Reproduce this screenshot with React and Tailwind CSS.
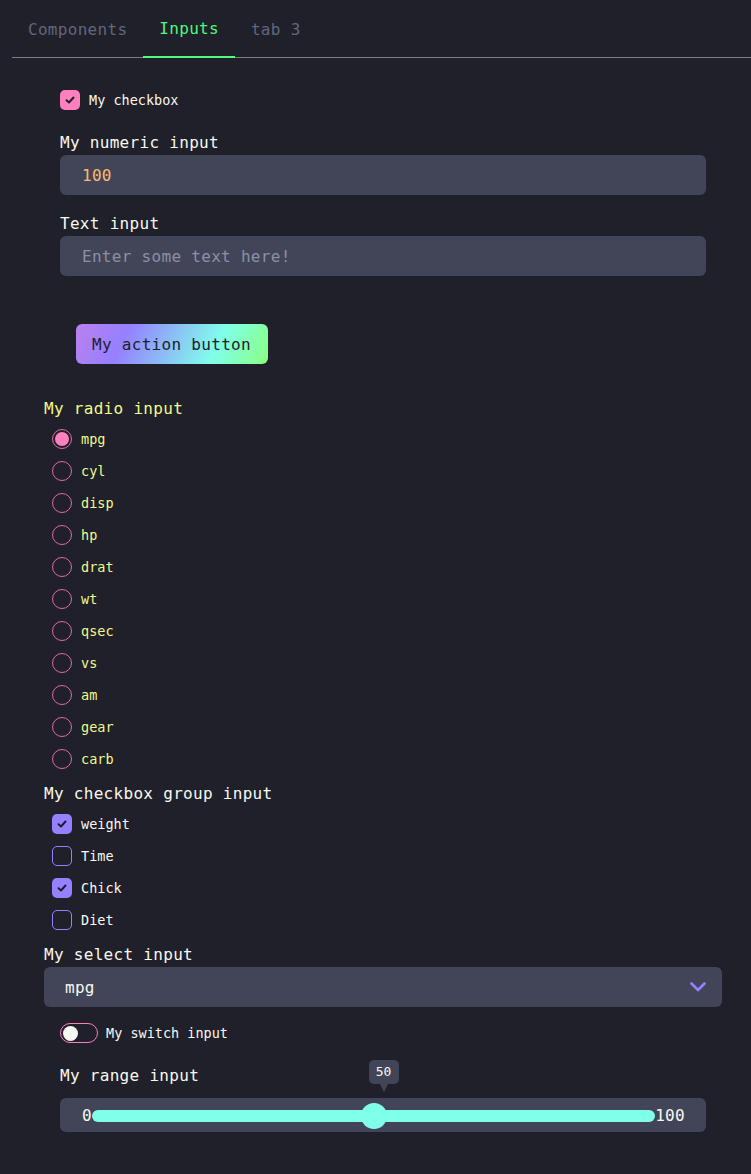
import React, { useState } from 'react';

const font = { fontFamily: '"DejaVu Sans Mono", "Liberation Mono", monospace' };

const radios = ['mpg', 'cyl', 'disp', 'hp', 'drat', 'wt', 'qsec', 'vs', 'am', 'gear', 'carb'];
const groupItems = [
  { label: 'weight', checked: true },
  { label: 'Time', checked: false },
  { label: 'Chick', checked: true },
  { label: 'Diet', checked: false },
];

const Check = () => (
  <svg viewBox="0 0 12 12" className="h-3 w-3" fill="none">
    <path d="M2.5 6.2 L5 8.5 L9.5 3.5" stroke="#1f2029" strokeWidth="2" strokeLinecap="round" strokeLinejoin="round" />
  </svg>
);

const App = () => {
  const [tab] = useState('Inputs');
  const [range] = useState(50);

  return (
    <div className="min-h-[1174px] w-[751px] bg-[#1f2029] text-[#f8f8f2] tracking-[0.3px]" style={font}>
      {/* Tabs */}
      <div className="ml-3 flex h-[58px] border-b border-[#7b7d8e]">
        {['Components', 'Inputs', 'tab 3'].map((t) => (
          <div
            key={t}
            className={`flex h-[58px] items-center px-4 pt-px text-[16px] ${
              t === tab ? '-mb-px border-b-2 border-[#50fa7b] text-[#50fa7b]' : 'text-[#62667f]'
            }`}
          >
            {t}
          </div>
        ))}
      </div>

      <div className="pl-[44px] pr-[29px]">
        {/* First block */}
        <div className="px-4">
          <div className="mt-8 flex h-5 items-center gap-[9px]">
            <div className="flex h-5 w-5 items-center justify-center rounded-[5px] bg-[#ff80bf]">
              <Check />
            </div>
            <span className="pt-px text-[13.5px] tracking-[0px]">My checkbox</span>
          </div>

          <div className="mt-5 pt-px text-[16px] leading-6">My numeric input</div>
          <div className="flex h-10 items-center rounded-[6px] bg-[#424557] px-[22px] pt-[2px] text-[16px] text-[#ffb86c]">
            100
          </div>

          <div className="mt-4 pt-px text-[16px] leading-6">Text input</div>
          <div className="flex h-10 items-center rounded-[6px] bg-[#424557] px-[22px] pt-[2px] text-[16px] text-[#8d8fa3]">
            Enter some text here!
          </div>

          <div className="ml-4 mt-12 flex h-10 w-[192px] items-center rounded-[6px] bg-[linear-gradient(115deg,#bb80ee_0%,#9580ff_26%,#80ffea_72%,#8aff80_100%)] px-4 pt-px text-[16px] text-[#1f2029]">
            My action button
          </div>
        </div>

        {/* Radio */}
        <div className="mt-8 pt-px text-[16px] leading-6 text-[#f1fa8c]">My radio input</div>
        <div className="mt-[2px]">
          {radios.map((r, i) => (
            <div key={r} className="flex h-8 items-center gap-[9px] pl-2">
              <div className="flex h-5 w-5 items-center justify-center rounded-full border-[1.5px] border-[#e06aa9]">
                {i === 0 && <div className="h-[14px] w-[14px] rounded-full bg-[#ff80bf]" />}
              </div>
              <span className="pt-px text-[13.5px] tracking-[0px] text-[#f1fa8c]">{r}</span>
            </div>
          ))}
        </div>

        {/* Checkbox group */}
        <div className="mt-[6px] pt-px text-[16px] leading-6">My checkbox group input</div>
        <div className="mt-[2px]">
          {groupItems.map((c) => (
            <div key={c.label} className="flex h-8 items-center gap-[9px] pl-2">
              <div
                className={`flex h-5 w-5 items-center justify-center rounded-[5px] ${
                  c.checked ? 'bg-[#9580ff]' : 'border-[1.5px] border-[#9580ff]'
                }`}
              >
                {c.checked && <Check />}
              </div>
              <span className="pt-px text-[13.5px] tracking-[0px]">{c.label}</span>
            </div>
          ))}
        </div>

        {/* Select */}
        <div className="mt-[6px] pt-px text-[16px] leading-6">My select input</div>
        <div className="flex h-10 items-center justify-between rounded-[6px] bg-[#424557] pl-[21px] pr-4 text-[16px]">
          <span className="pt-[2px]">mpg</span>
          <svg viewBox="0 0 16 10" className="h-[10px] w-4" fill="none">
            <path d="M1.5 1.5 L8 8 L14.5 1.5" stroke="#9580ff" strokeWidth="2.6" strokeLinecap="round" strokeLinejoin="round" />
          </svg>
        </div>

        <div className="px-4">
          {/* Switch */}
          <div className="mt-4 flex h-5 items-center gap-2">
            <div className="flex h-5 w-[38px] items-center rounded-full border border-[#ff79c6] px-[2px]">
              <div className="h-[15px] w-[15px] rounded-full bg-[#f8f8f2]" />
            </div>
            <span className="pt-px text-[13.5px] tracking-[0px]">My switch input</span>
          </div>

          {/* Range */}
          <div className="mt-5 pt-px text-[16px] leading-6">My range input</div>
          <div className="mt-[10px] flex h-[34px] items-center rounded-[6px] bg-[#424557] pl-[22px] pr-[21px] pt-px text-[16px]">
            <span>0</span>
            <div className="relative flex h-3 flex-1 items-center rounded-full bg-[#80ffea]">
              <div
                className="absolute h-[26px] w-[26px] -translate-x-1/2 rounded-full bg-[#80ffea]"
                style={{ left: `${range}%` }}
              />
              <div
                className="absolute bottom-[30px] ml-[10px] flex -translate-x-1/2 flex-col items-center"
                style={{ left: `${range}%` }}
              >
                <div className="flex h-6 w-[30px] items-center justify-center rounded-[5px] bg-[#424557] text-[13px] tracking-normal">
                  {range}
                </div>
                <div className="h-0 w-0 border-x-[4px] border-t-[8px] border-x-transparent border-t-[#424557]" />
              </div>
            </div>
            <span>100</span>
          </div>
        </div>
      </div>
    </div>
  );
};

export default App;
